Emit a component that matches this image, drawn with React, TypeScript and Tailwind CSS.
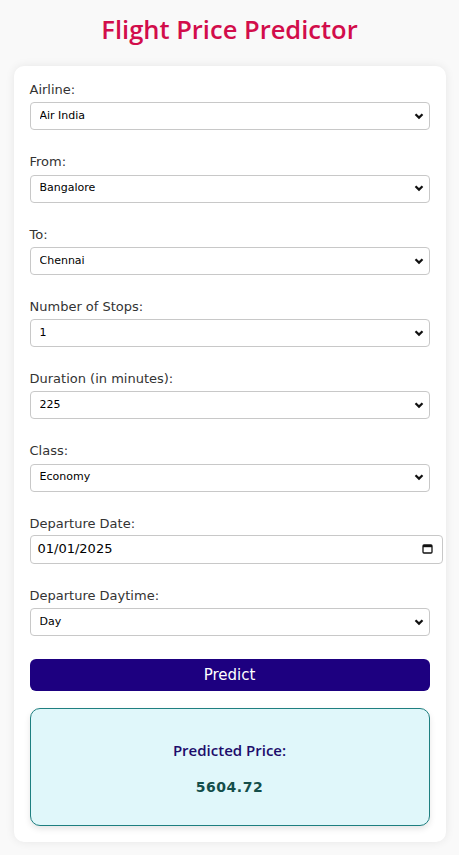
import React from "react";

const fields = [
  { label: "Airline:", value: "Air India", options: ["Air India", "IndiGo", "Vistara", "SpiceJet", "AirAsia", "GO FIRST"] },
  { label: "From:", value: "Bangalore", options: ["Bangalore", "Delhi", "Mumbai", "Kolkata", "Hyderabad", "Chennai"] },
  { label: "To:", value: "Chennai", options: ["Chennai", "Delhi", "Mumbai", "Kolkata", "Hyderabad", "Bangalore"] },
  { label: "Number of Stops:", value: "1", options: ["0", "1", "2"] },
  { label: "Duration (in minutes):", value: "225", options: ["225", "120", "180", "300"] },
  { label: "Class:", value: "Economy", options: ["Economy", "Business"] },
];

const Chevron = () => (
  <svg width="12" height="12" viewBox="0 0 12 12" className="pointer-events-none absolute right-[5px] top-1/2 -translate-y-1/2">
    <path d="M2.5 4.2 L6 7.6 L9.5 4.2" fill="none" stroke="#111" strokeWidth="2.2" />
  </svg>
);

const SelectField = ({ label, value, options }: { label: string; value: string; options: string[] }) => (
  <div className="flex flex-col">
    <label className="text-[13px] leading-4 text-[#333] pt-[2px] mb-[4px]">{label}</label>
    <div className="relative">
      <select
        defaultValue={value}
        className="w-full h-[28px] appearance-none rounded-[4px] border border-[#c8c8c8] bg-white pl-[9px] text-[11px] text-black outline-none"
      >
        {options.map((o) => (
          <option key={o}>{o}</option>
        ))}
      </select>
      <Chevron />
    </div>
  </div>
);

const App = () => {
  return (
    <div
      className="min-h-[855px] w-full bg-[#f9f9f9] flex flex-col items-center"
      style={{ fontFamily: "Tahoma, 'DejaVu Sans', Verdana, sans-serif" }}
    >
      <h1
        className="mt-[11px] h-[36px] text-[25.5px] font-semibold leading-[36px] text-[#d20d4b]"
        style={{ fontFamily: "'Open Sans', 'Noto Sans', sans-serif" }}
      >
        Flight Price Predictor
      </h1>
      <div className="mt-[19px] w-[432px] rounded-[10px] bg-white px-[16px] pt-[14px] pb-[16px] shadow-[0_0_10px_rgba(0,0,0,0.08)] flex flex-col gap-[22px]">
        {fields.map((f) => (
          <SelectField key={f.label} label={f.label} value={f.value} options={f.options} />
        ))}
        <div className="flex flex-col">
          <label className="text-[13px] leading-4 text-[#333] pt-[2px] mb-[3px]">Departure Date:</label>
          <div className="relative w-[413px] h-[29px] rounded-[4px] border border-[#c8c8c8] bg-white flex items-center pl-[7px]">
            <span className="text-[13px] text-black">01/01/2025</span>
            <svg width="11" height="11" viewBox="0 0 11 11" className="absolute right-[9px] top-1/2 -translate-y-1/2">
              <rect x="1" y="1.5" width="9" height="8" rx="1" fill="none" stroke="#111" strokeWidth="1.3" />
              <rect x="1" y="1.5" width="9" height="2.2" fill="#111" />
            </svg>
          </div>
        </div>
        <SelectField label="Departure Daytime:" value="Day" options={["Day", "Night", "Morning", "Evening"]} />
        <div className="flex flex-col gap-[17px] mt-[1px]">
          <button className="h-[32px] w-full rounded-[6px] bg-[#1d0080] text-[15px] text-white">Predict</button>
          <div className="h-[118px] rounded-[10px] border border-[#1e7f80] bg-[#e0f7fa] shadow-[0_3px_6px_rgba(0,0,0,0.1)] flex flex-col items-center justify-center">
            <div
              className="text-[15px] font-semibold text-[#1d0d6b] mt-[3px]"
              style={{ fontFamily: "'Open Sans', 'Noto Sans', sans-serif" }}
            >
              Predicted Price:
            </div>
            <div
              className="mt-[15px] text-[14px] font-bold tracking-[0.5px] text-[#134e4a]"
              style={{ fontFamily: "'DejaVu Sans', Verdana, sans-serif" }}
            >
              5604.72
            </div>
          </div>
        </div>
      </div>
    </div>
  );
};

export default App;
